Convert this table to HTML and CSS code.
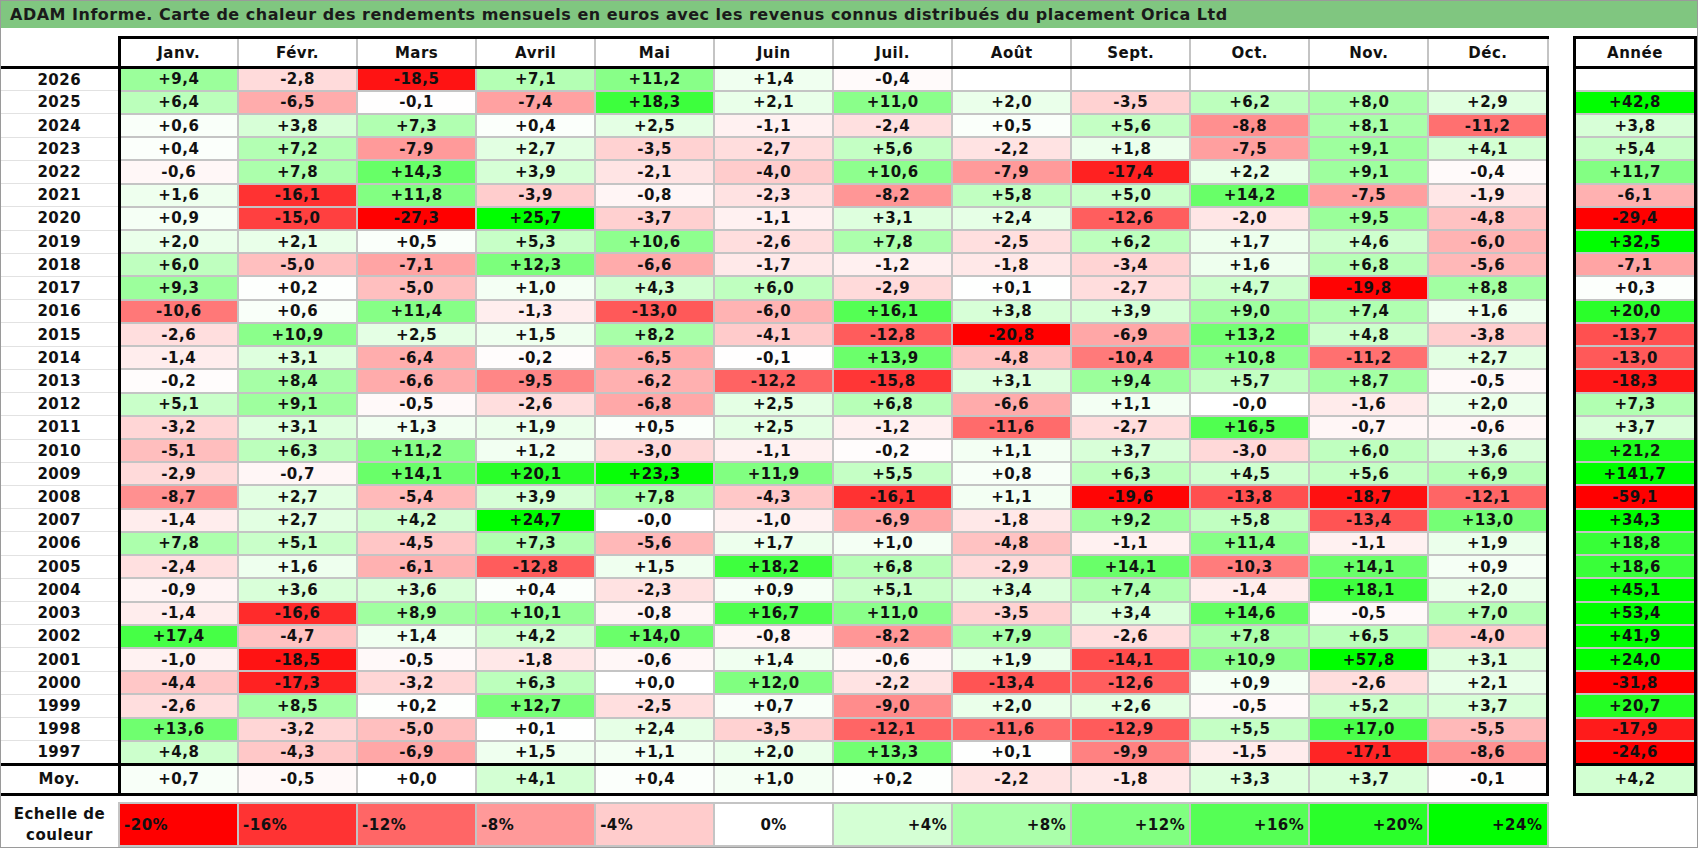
FILE: index.html
```html
<!DOCTYPE html>
<html lang="fr">
<head>
<meta charset="utf-8">
<title>ADAM Informe – Orica Ltd</title>
<link rel="stylesheet" href="styles.css">
</head>
<body>
<div class="frame">
  <h1 class="title">ADAM Informe. Carte de chaleur des rendements mensuels en euros avec les revenus connus distribués du placement Orica Ltd</h1>
  <table class="heat">
    <colgroup>
      <col class="c-year">
      <col span="12">
      <col class="c-gap">
      <col class="c-ann">
    </colgroup>
    <thead>
      <tr class="head">
        <th class="corner"></th>
        <th class="m">Janv.</th>
        <th class="m">Févr.</th>
        <th class="m">Mars</th>
        <th class="m">Avril</th>
        <th class="m">Mai</th>
        <th class="m">Juin</th>
        <th class="m">Juil.</th>
        <th class="m">Août</th>
        <th class="m">Sept.</th>
        <th class="m">Oct.</th>
        <th class="m">Nov.</th>
        <th class="m last">Déc.</th>
        <th class="gap"></th>
        <th class="ann">Année</th>
      </tr>
    </thead>
    <tbody id="rows"></tbody>
    <tfoot>
      <tr class="moy" id="moy"></tr>
      <tr class="spacer"><td colspan="15"></td></tr>
      <tr class="legend">
        <th class="lg-label">Echelle de<br>couleur</th>
        <td class="lg left l-m20">-20%</td>
        <td class="lg left l-m16">-16%</td>
        <td class="lg left l-m12">-12%</td>
        <td class="lg left l-m8">-8%</td>
        <td class="lg left l-m4">-4%</td>
        <td class="lg mid l-0">0%</td>
        <td class="lg right l-p4">+4%</td>
        <td class="lg right l-p8">+8%</td>
        <td class="lg right l-p12">+12%</td>
        <td class="lg right l-p16">+16%</td>
        <td class="lg right l-p20">+20%</td>
        <td class="lg right l-p24">+24%</td>
        <td class="gap"></td>
        <td class="lg-empty"></td>
      </tr>
    </tfoot>
  </table>
</div>
<script src="script.js"></script>
</body>
</html>
```

FILE: styles.css
```css
html, body {
  margin: 0;
  padding: 0;
  background: #ffffff;
}

body {
  font-family: "DejaVu Sans", "Liberation Sans", sans-serif;
  color: #111111;
}

.frame {
  width: 1698px;
  height: 848px;
  box-sizing: border-box;
  border: 1px solid #9a9a9a;
  overflow: hidden;
}

.title {
  margin: 0;
  height: 27px;
  line-height: 28px;
  padding-left: 9px;
  background: #80c680;
  font-size: 16px;
  letter-spacing: 0.5px;
  font-weight: bold;
  color: #1a1a1a;
  white-space: nowrap;
}

.heat {
  margin-top: 8px;
  width: 1696px;
  table-layout: fixed;
  border-collapse: collapse;
  font-size: 15px;
  letter-spacing: 0.5px;
  font-weight: bold;
}

.c-year { width: 118px; }
.c-gap { width: 27px; }
.c-ann { width: 121px; }

.heat th,
.heat td {
  padding: 0;
  text-align: center;
  vertical-align: middle;
  white-space: nowrap;
  overflow: hidden;
}

/* header */
.head { height: 30px; }

.head .m {
  border-top: 3px solid #000;
  border-bottom: 3px solid #000;
  border-left: 2px solid #c4c4c4;
  border-right: 2px solid #c4c4c4;
}

.head .corner {
  border-bottom: 3px solid #000;
  border-right: 3px solid #000;
}

.head .ann {
  border: 3px solid #000;
}

/* body rows */
#rows tr { height: 23.23px; }

.yr {
  border-right: 3px solid #000;
  border-bottom: 1px solid #e2e2e2;
}

.v {
  border: 2px solid #c4c4c4;
}

.v.last {
  border-right: 3px solid #000;
}

.av {
  border-left: 3px solid #000;
  border-right: 3px solid #000;
  border-bottom: 2px solid #c4c4c4;
}

.gap {
  border: none;
}

/* average row */
.moy { height: 30px; }

.moy .yr {
  border-top: 3px solid #000;
  border-bottom: 3px solid #000;
}

.moy .v {
  border-top: 3px solid #000;
  border-bottom: 3px solid #000;
}

.moy .av {
  border: 3px solid #000;
}

/* spacer and legend */
.spacer { height: 9px; }
.spacer td { border: none; }

.legend { height: 43px; }

.lg-label {
  line-height: 21px;
  border: none;
}

.lg {
  border: 2px solid #c4c4c4;
}

.lg.left { text-align: left; padding-left: 4px; }
.lg.mid { text-align: center; }
.lg.right { text-align: right; padding-right: 4px; }

.lg-empty { border: none; }

.l-m20 { background: #ff0000; }
.l-m16 { background: #ff3333; }
.l-m12 { background: #ff6666; }
.l-m8  { background: #ff9999; }
.l-m4  { background: #ffcccc; }
.l-0   { background: #ffffff; }
.l-p4  { background: #d4ffd4; }
.l-p8  { background: #aaffaa; }
.l-p12 { background: #80ff80; }
.l-p16 { background: #55ff55; }
.l-p20 { background: #2aff2a; }
.l-p24 { background: #00ff00; }
```

FILE: script.js
```js
const raw = `2026|+9,4 -2,8 -18,5 +7,1 +11,2 +1,4 -0,4 . . . . .|.
2025|+6,4 -6,5 -0,1 -7,4 +18,3 +2,1 +11,0 +2,0 -3,5 +6,2 +8,0 +2,9|+42,8
2024|+0,6 +3,8 +7,3 +0,4 +2,5 -1,1 -2,4 +0,5 +5,6 -8,8 +8,1 -11,2|+3,8
2023|+0,4 +7,2 -7,9 +2,7 -3,5 -2,7 +5,6 -2,2 +1,8 -7,5 +9,1 +4,1|+5,4
2022|-0,6 +7,8 +14,3 +3,9 -2,1 -4,0 +10,6 -7,9 -17,4 +2,2 +9,1 -0,4|+11,7
2021|+1,6 -16,1 +11,8 -3,9 -0,8 -2,3 -8,2 +5,8 +5,0 +14,2 -7,5 -1,9|-6,1
2020|+0,9 -15,0 -27,3 +25,7 -3,7 -1,1 +3,1 +2,4 -12,6 -2,0 +9,5 -4,8|-29,4
2019|+2,0 +2,1 +0,5 +5,3 +10,6 -2,6 +7,8 -2,5 +6,2 +1,7 +4,6 -6,0|+32,5
2018|+6,0 -5,0 -7,1 +12,3 -6,6 -1,7 -1,2 -1,8 -3,4 +1,6 +6,8 -5,6|-7,1
2017|+9,3 +0,2 -5,0 +1,0 +4,3 +6,0 -2,9 +0,1 -2,7 +4,7 -19,8 +8,8|+0,3
2016|-10,6 +0,6 +11,4 -1,3 -13,0 -6,0 +16,1 +3,8 +3,9 +9,0 +7,4 +1,6|+20,0
2015|-2,6 +10,9 +2,5 +1,5 +8,2 -4,1 -12,8 -20,8 -6,9 +13,2 +4,8 -3,8|-13,7
2014|-1,4 +3,1 -6,4 -0,2 -6,5 -0,1 +13,9 -4,8 -10,4 +10,8 -11,2 +2,7|-13,0
2013|-0,2 +8,4 -6,6 -9,5 -6,2 -12,2 -15,8 +3,1 +9,4 +5,7 +8,7 -0,5|-18,3
2012|+5,1 +9,1 -0,5 -2,6 -6,8 +2,5 +6,8 -6,6 +1,1 -0,0 -1,6 +2,0|+7,3
2011|-3,2 +3,1 +1,3 +1,9 +0,5 +2,5 -1,2 -11,6 -2,7 +16,5 -0,7 -0,6|+3,7
2010|-5,1 +6,3 +11,2 +1,2 -3,0 -1,1 -0,2 +1,1 +3,7 -3,0 +6,0 +3,6|+21,2
2009|-2,9 -0,7 +14,1 +20,1 +23,3 +11,9 +5,5 +0,8 +6,3 +4,5 +5,6 +6,9|+141,7
2008|-8,7 +2,7 -5,4 +3,9 +7,8 -4,3 -16,1 +1,1 -19,6 -13,8 -18,7 -12,1|-59,1
2007|-1,4 +2,7 +4,2 +24,7 -0,0 -1,0 -6,9 -1,8 +9,2 +5,8 -13,4 +13,0|+34,3
2006|+7,8 +5,1 -4,5 +7,3 -5,6 +1,7 +1,0 -4,8 -1,1 +11,4 -1,1 +1,9|+18,8
2005|-2,4 +1,6 -6,1 -12,8 +1,5 +18,2 +6,8 -2,9 +14,1 -10,3 +14,1 +0,9|+18,6
2004|-0,9 +3,6 +3,6 +0,4 -2,3 +0,9 +5,1 +3,4 +7,4 -1,4 +18,1 +2,0|+45,1
2003|-1,4 -16,6 +8,9 +10,1 -0,8 +16,7 +11,0 -3,5 +3,4 +14,6 -0,5 +7,0|+53,4
2002|+17,4 -4,7 +1,4 +4,2 +14,0 -0,8 -8,2 +7,9 -2,6 +7,8 +6,5 -4,0|+41,9
2001|-1,0 -18,5 -0,5 -1,8 -0,6 +1,4 -0,6 +1,9 -14,1 +10,9 +57,8 +3,1|+24,0
2000|-4,4 -17,3 -3,2 +6,3 +0,0 +12,0 -2,2 -13,4 -12,6 +0,9 -2,6 +2,1|-31,8
1999|-2,6 +8,5 +0,2 +12,7 -2,5 +0,7 -9,0 +2,0 +2,6 -0,5 +5,2 +3,7|+20,7
1998|+13,6 -3,2 -5,0 +0,1 +2,4 -3,5 -12,1 -11,6 -12,9 +5,5 +17,0 -5,5|-17,9
1997|+4,8 -4,3 -6,9 +1,5 +1,1 +2,0 +13,3 +0,1 -9,9 -1,5 -17,1 -8,6|-24,6`;

const moy = "+0,7 -0,5 +0,0 +4,1 +0,4 +1,0 +0,2 -2,2 -1,8 +3,3 +3,7 -0,1|+4,2";

function bg(s) {
  const v = parseFloat(s.replace(",", "."));
  if (v < 0) {
    const c = Math.round(255 * (1 - Math.min(1, -v / 20)));
    return `rgb(255,${c},${c})`;
  }
  const c = Math.round(255 * (1 - Math.min(1, v / 24)));
  return `rgb(${c},255,${c})`;
}

function valueCell(s, cls) {
  const td = document.createElement("td");
  td.className = cls;
  if (s !== ".") {
    td.textContent = s;
    td.style.background = bg(s);
  }
  return td;
}

function fillRow(tr, label, months, year) {
  const th = document.createElement("th");
  th.className = "yr";
  th.textContent = label;
  tr.appendChild(th);
  months.forEach((s, i) => {
    tr.appendChild(valueCell(s, i === 11 ? "v last" : "v"));
  });
  const gap = document.createElement("td");
  gap.className = "gap";
  tr.appendChild(gap);
  tr.appendChild(valueCell(year, "av"));
}

const body = document.getElementById("rows");
raw.split("\n").forEach((line) => {
  const [label, months, year] = line.split("|");
  const tr = document.createElement("tr");
  fillRow(tr, label, months.trim().split(/\s+/), year.trim());
  body.appendChild(tr);
});

const [mm, my] = moy.split("|");
fillRow(document.getElementById("moy"), "Moy.", mm.split(/\s+/), my);
```
